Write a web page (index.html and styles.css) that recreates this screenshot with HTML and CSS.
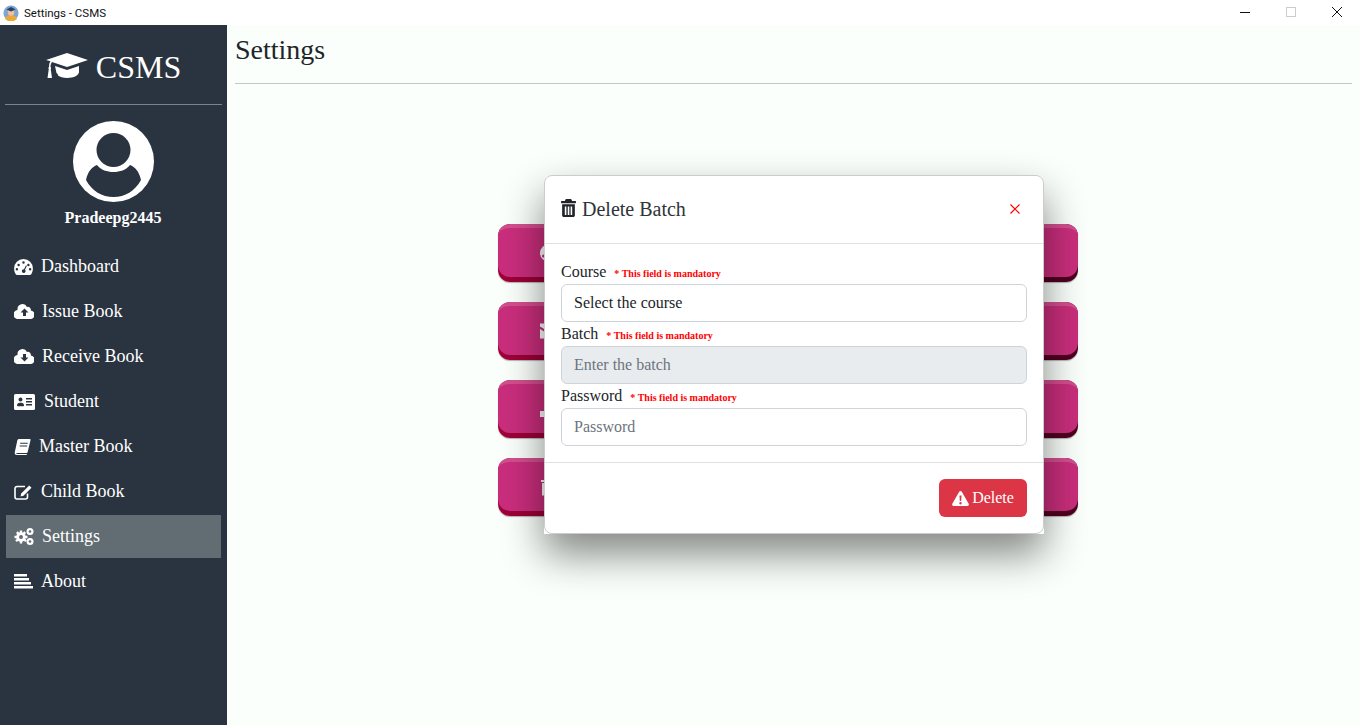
FILE: index.html
```html
<!DOCTYPE html>
<html lang="en">
<head>
<meta charset="utf-8">
<title>Settings - CSMS</title>
<link rel="stylesheet" href="styles.css">
</head>
<body>
<header class="titlebar">
  <svg class="app-icon" viewBox="0 0 16 16"><circle cx="8" cy="8" r="7.600" fill="#7fa6cf"/><path d="M2 14c1-3 3-4 6-4s5 1 6 4l-3 2H5z" fill="#e8a93a"/><circle cx="8" cy="7.500" r="3.200" fill="#f0c09a"/><path d="M3.500 4.500 8 2l4.500 2.500L8 6.500z" fill="#25406e"/></svg>
  <span class="win-title">Settings - CSMS</span>
  <div class="win-controls">
    <svg class="win-btn" viewBox="0 0 46 25"><path d="M18 12.500h10" stroke="#111" fill="none"/></svg>
    <svg class="win-btn" viewBox="0 0 46 25"><rect x="18.500" y="7.500" width="9" height="9" stroke="#ccc" fill="none"/></svg>
    <svg class="win-btn" viewBox="0 0 46 25"><path d="M18 7l10 10M28 7L18 17" stroke="#111" fill="none"/></svg>
  </div>
</header>
<div class="app">
  <aside class="sidebar">
    <div class="brand">
      <svg class="brand-icon" viewBox="0 0 42 28"><path d="M21 0 42 7 21 14 6 9c-1 1-1.500 3-1.500 5 .8.5.8 1.500.2 2l1.300 9H1.500l1.300-9c-.6-.5-.6-1.500.2-2 0-2.500.5-4.500 1.500-5.700L0 7zM9 13l12 4 12-4v6c0 3-5 6-12 6-4 0-7-1-9-2.500 0-1-.5-2-1.500-2.500z" fill="#fff"/></svg>
      <span>CSMS</span>
    </div>
    <div class="profile">
      <svg class="avatar" viewBox="0 0 81 81"><circle cx="40.500" cy="40.500" r="40.500" fill="#fff"/><circle cx="40.500" cy="29" r="17" fill="#2a3440"/><path d="M13 59C15 50 19 46 24 44 28 49 34 51 40.500 51S53 49 57 44C62 46 66 50 68 59 62 70 52 76 40.500 76S19 70 13 59Z" fill="#2a3440"/></svg>
      <div class="username">Pradeepg2445</div>
    </div>
    <nav class="menu">
      <a class="item"><svg class="ico i-dash" viewBox="0 0 20 17"><path fill-rule="evenodd" d="M10 0a10 10 0 0 1 10 10c0 2.500-.8 4.800-2 6.500-.3.300-.6.500-1 .500H3c-.4 0-.7-.2-1-.5C.8 14.800 0 12.500 0 10A10 10 0 0 1 10 0zM10 2.500a1.300 1.300 0 1 0 0 2.600 1.300 1.300 0 0 0 0-2.600zM4.800 5a1.300 1.300 0 1 0 0 2.600 1.300 1.300 0 0 0 0-2.600zM15.200 5a1.300 1.300 0 1 0 0 2.600 1.300 1.300 0 0 0 0-2.600zM3 9.600a1.300 1.300 0 1 0 0 2.600 1.300 1.300 0 0 0 0-2.600zM17 9.600a1.300 1.300 0 1 0 0 2.600 1.300 1.300 0 0 0 0-2.600zM12.600 6.800 10.500 10.900a2 2 0 1 0 1.100.5l2.100-4.100z" fill="#fff"/></svg><span>Dashboard</span></a>
      <a class="item"><svg class="ico i-cloud" viewBox="0 0 20 15"><path fill-rule="evenodd" d="M16.800 6.600A3 3 0 0 0 13 3 5 5 0 0 0 3.500 5.500v.5A4.500 4.500 0 0 0 4.500 15H16a4 4 0 0 0 .8-8.400zM10.500 4.500l4 4H12V12H9V8.500H6.500z" fill="#fff"/></svg><span>Issue Book</span></a>
      <a class="item"><svg class="ico i-cloud" viewBox="0 0 20 15"><path fill-rule="evenodd" d="M16.800 6.600A3 3 0 0 0 13 3 5 5 0 0 0 3.500 5.500v.5A4.500 4.500 0 0 0 4.500 15H16a4 4 0 0 0 .8-8.400zM10.500 12.500l-4-4H9V5h3v3.500h2.500z" fill="#fff"/></svg><span>Receive Book</span></a>
      <a class="item"><svg class="ico i-card" viewBox="0 0 21 16"><path fill-rule="evenodd" d="M1.500 0h18A1.500 1.500 0 0 1 21 1.500v13a1.500 1.500 0 0 1-1.500 1.500h-18A1.500 1.500 0 0 1 0 14.500v-13A1.500 1.500 0 0 1 1.500 0zM6.500 3.500a2 2 0 1 0 0 4 2 2 0 0 0 0-4zM3 11.500c0 .5.300.8.800.8h5.500c.5 0 .8-.3.800-.8 0-1.500-1.200-2.800-2.800-2.800H5.800C4.200 8.700 3 10 3 11.500zM12 4v1.500h6V4zM12 7v1.500h6V7zM12 10v1.500h6V10z" fill="#fff"/></svg><span>Student</span></a>
      <a class="item"><svg class="ico i-book" viewBox="0 0 17 17"><path fill-rule="evenodd" d="M5 0h11c.8 0 1.200.6 1 1.300l-3 12.500c-.2.800-.6 1.200-1.400 1.200H3c-1 0-1.200.6-.8 1H13v1H2.500C.8 17 0 15.800 .3 14L3 1.500C3.200.6 4 0 5 0zM6 4v1h8V4zM5.500 7v1h8V7z" fill="#fff"/></svg><span>Master Book</span></a>
      <a class="item"><svg class="ico i-edit" viewBox="0 0 19 16"><path d="M13.500 9.500V13a2 2 0 0 1-2 2H3a2 2 0 0 1-2-2V4.500a2 2 0 0 1 2-2h8" fill="none" stroke="#fff" stroke-width="1.600"/><path d="M15.200 1.500l2.300 2.300L9.500 11.800 6.500 12.500l.7-3z" fill="#fff"/></svg><span>Child Book</span></a>
      <a class="item active"><svg class="ico i-cogs" viewBox="0 0 20 17"><g fill="#fff"><circle cx="7" cy="9" r="4.800"/><path d="M5.800 2.500h2.400v13H5.800zM.5 7.800h13v2.400H.5zM2 4.900l1.700-1.700 9.200 9.200-1.700 1.700zM12.100 4.900l-1.700-1.700-9.200 9.200 1.700 1.700z"/></g><circle cx="7" cy="9" r="2" fill="#616c73"/><circle cx="16" cy="3.500" r="3.500" fill="#fff"/><circle cx="16" cy="3.500" r="1.300" fill="#616c73"/><circle cx="16" cy="13.500" r="3.500" fill="#fff"/><circle cx="16" cy="13.500" r="1.300" fill="#616c73"/></svg><span>Settings</span></a>
      <a class="item"><svg class="ico i-about" viewBox="0 0 19 15"><path d="M0 0h13v2.500H0zM0 4h15v2.500H0zM0 8h17v2.500H0zM0 12h19v2.500H0z" fill="#fff"/></svg><span>About</span></a>
    </nav>
  </aside>
  <main class="content">
    <h1 class="page-title">Settings</h1>
    <div class="rule"></div>
    <div class="actions">
      <div class="big-btn"><div class="big-face"><svg class="big-ico" viewBox="0 0 18 18"><path fill-rule="evenodd" d="M9 0a9 9 0 1 1 0 18A9 9 0 0 1 9 0zM3.500 13.500a1.500 1.500 0 1 0 0-3 1.500 1.500 0 0 0 0 3z" fill="#fff"/></svg></div></div>
      <div class="big-btn"><div class="big-face"><svg class="big-ico" viewBox="0 0 18 18"><path d="M0 1.500h18v3L9 10 0 4.500zM0 7l9 5.500L18 7v9.500H0z" fill="#fff"/></svg></div></div>
      <div class="big-btn"><div class="big-face"><svg class="big-ico" viewBox="0 0 18 18"><path d="M9 0l5 5h-3v7H7V5H4zM0 11h5v2.500h8V11h5v6H0z" fill="#fff"/></svg></div></div>
      <div class="big-btn"><div class="big-face"><svg class="big-ico" viewBox="0 0 18 18"><path fill-rule="evenodd" d="M1 2h16v2H1zM2 5h14v12.500H2zM4 7v8.500h1.500V7zM7 7v8.500h1.500V7z" fill="#fff"/></svg></div></div>
    </div>
  </main>
</div>
<section class="modal">
  <div class="modal-inner">
    <div class="modal-head">
      <h2 class="modal-title"><svg class="trash" viewBox="0 0 14 17"><path fill-rule="evenodd" d="M4.500 0h5l1 2H14v2H0V2h3.500zM1 5h12v10.500c0 .8-.7 1.500-1.500 1.500h-9C1.700 17 1 16.300 1 15.500zM3.500 7v8H5V7zM6.300 7v8h1.500V7zM9 7v8h1.500V7z" fill="#212529"/></svg> Delete Batch</h2>
      <svg class="close" viewBox="0 0 10 10"><path d="M.5.500l9 9M9.500.500l-9 9" stroke="#f00" stroke-width="1.200" fill="none"/></svg>
    </div>
    <div class="modal-body">
      <label class="label">Course <span class="req">* This field is mandatory</span></label>
      <div class="field">Select the course</div>
      <label class="label">Batch <span class="req">* This field is mandatory</span></label>
      <div class="field disabled">Enter the batch</div>
      <label class="label">Password <span class="req">* This field is mandatory</span></label>
      <div class="field placeholder">Password</div>
    </div>
    <div class="modal-foot">
      <button class="del-btn"><svg class="warn" viewBox="0 0 17 15"><path fill-rule="evenodd" d="M8.500 0c.6 0 1 .3 1.300.8l6.900 12c.5.900-.1 2.200-1.200 2.200H1.500C.4 15-.2 13.700.3 12.800l6.900-12C7.500.3 7.900 0 8.500 0zM7.500 4.500l.3 5.500h1.400l.3-5.500zM8.500 11a1.200 1.200 0 1 0 0 2.400 1.200 1.200 0 0 0 0-2.400z" fill="#fff"/></svg>Delete</button>
    </div>
  </div>
</section>
</body>
</html>
```
FILE: styles.css
```css
* { box-sizing: border-box; }
html, body { margin: 0; height: 100%; overflow: hidden; }
body { font-family: "Liberation Serif", "Times New Roman", serif; background: #fff; color: #212529; }

.titlebar { height: 25px; background: #fff; display: flex; align-items: center; padding-left: 3px; }
.app-icon { width: 16px; height: 16px; }
.win-title { font: 11.500px Roboto, "Liberation Sans", Arial, sans-serif; color: #111; margin-left: 5px; }
.win-controls { margin-left: auto; display: flex; }
.win-btn { width: 46px; height: 25px; display: block; }

.app { display: flex; height: 700px; }
.sidebar { width: 227px; flex: none; background: #2a3440; color: #fff; padding: 0 6px 0 5px; }
.brand { height: 80px; border-bottom: 1px solid #7d8389; display: flex; align-items: center; justify-content: center; gap: 8px; font-size: 32px; padding: 6px 0 0 0; margin-right: -1px; }
.brand-icon { width: 42px; height: 28px; margin-top: -1px; }
.profile { display: flex; flex-direction: column; align-items: center; padding-top: 16px; }
.avatar { width: 81px; height: 81px; display: block; }
.username { font-size: 16px; font-weight: 700; margin-top: 6px; line-height: 20px; }
.menu { margin-top: 17px; display: flex; flex-direction: column; gap: 2px; padding-left: 1px; }
.item { height: 43px; display: flex; align-items: center; padding-left: 8px; font-size: 18px; color: #fff; }
.item span { margin-left: 8px; }
.active { background: #616c73; }
.ico { display: block; flex: none; }
.i-dash { width: 19px; height: 16px; }
.i-cloud { width: 20px; height: 15px; }
.i-card { width: 21px; height: 16px; }
.item .i-card + span { margin-left: 9px; }
.i-book { width: 17px; height: 16px; }
.i-edit { width: 19px; height: 16px; }
.i-cogs { width: 20px; height: 17px; }
.i-about { width: 19px; height: 15px; }

.content { flex: 1; background: #fafffb; padding: 0 8px; display: flex; flex-direction: column; }
.page-title { font-size: 28px; font-weight: 400; margin: 0; line-height: 34px; padding-top: 8px; height: 58px; color: #212529; }
.rule { height: 1px; background: #c5c9c6; }
.actions { display: flex; flex-direction: column; gap: 20px; margin-top: 140px; padding-left: 263px; }
.big-btn { width: 580px; height: 58px; border-radius: 12px; background: linear-gradient(90deg, #a00038, #4e001f); box-shadow: 0 1px 1px #b5b5b5; }
.big-face { height: 53px; border-radius: 12px; background: #c92e7c; border-top: 4px solid #d24f8e; display: flex; align-items: center; padding-left: 42px; }
.big-ico { width: 18px; height: 18px; margin-top: 1px; }

.modal { position: absolute; left: 544px; top: 175px; width: 500px; height: 359px; background: #fff; border-radius: 8px 8px 0 0; box-shadow: 0 20px 40px rgba(0,0,0,.48); }
.modal-inner { height: 100%; border: 1px solid #ccc; border-radius: 8px; display: flex; flex-direction: column; }
.modal-head { height: 68px; flex: none; border-bottom: 1px solid #dee2e6; display: flex; align-items: center; justify-content: space-between; padding: 0 23px 2px 16px; }
.modal-title { font-size: 20px; font-weight: 400; margin: 0; line-height: 24px; display: flex; align-items: center; gap: 6px; color: #2f3438; }
.trash { width: 15px; height: 18px; margin-top: -2px; }
.close { width: 10px; height: 10px; }
.modal-body { flex: 1; padding: 16px 16px 0; }
.label { display: block; font-size: 16px; line-height: 24px; height: 24px; color: #212529; }
.req { color: #f00; font-size: 10px; font-weight: 700; margin-left: 4px; }
.field { height: 38px; border: 1px solid #ced4da; border-radius: 6px; padding: 0 12px; font-size: 16px; line-height: 36px; color: #212529; background: #fff; }
.disabled { background: #e9ecef; color: #6c757d; }
.placeholder { color: #6c757d; }
.modal-foot { height: 71px; flex: none; border-top: 1px solid #dee2e6; display: flex; align-items: center; justify-content: flex-end; padding: 0 16px; }
.del-btn { width: 88px; height: 38px; border: 0; border-radius: 6px; background: #dc3545; color: #fff; font: 16px "Liberation Serif", serif; display: flex; align-items: center; justify-content: center; gap: 3px; padding: 0; }
.warn { width: 17px; height: 15px; }
```
